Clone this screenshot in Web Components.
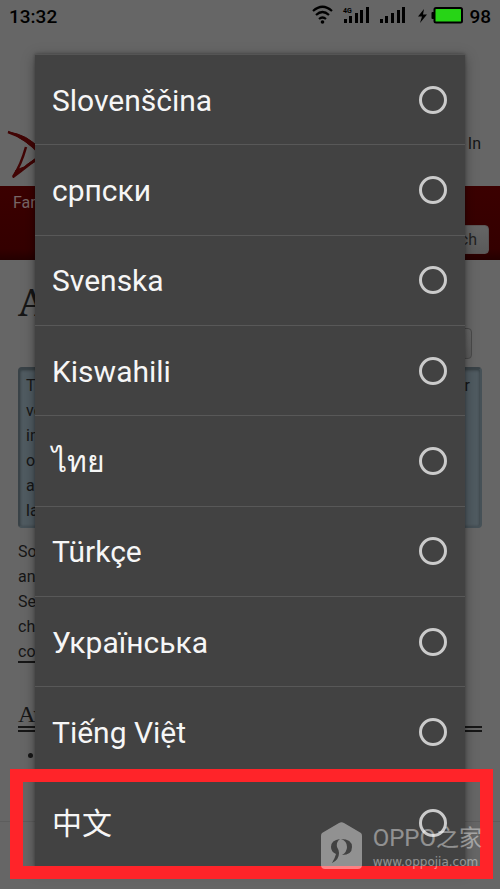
<!DOCTYPE html>
<html lang="en">
<head>
<meta charset="utf-8">
<meta name="viewport" content="width=device-width">
<title>Choose language</title>
<style>
html, body { height: 100%; }
body { margin: 0; background: #666; color: #161616; font-family: Roboto, "Noto Sans", "Noto Sans CJK SC", sans-serif; overflow: hidden; }
</style>
</head>
<body>
<phone-screen></phone-screen>
<script>
const define = (name, html) => customElements.define(name, class extends HTMLElement {
  constructor() {
    super();
    this.attachShadow({ mode: "open" }).innerHTML = html;
  }
});

define("status-bar", `
<style>
:host { display: flex; align-items: center; height: 32px; padding: 0 9px; color: #000; font-size: 19px; font-weight: 500; }
time { flex: 1; }
svg { display: block; }
</style>
<time>13:32</time>
<svg width="157" height="32" viewBox="312 0 157 32" aria-hidden="true">
  <g fill="none" stroke="#000" stroke-width="2.2">
    <path d="M313 11Q322.500 2.500 332 11M316 15Q322.500 9 329 15M319 19Q322.500 16 326 19"/>
  </g>
  <circle cx="322.500" cy="22" r="1.800"/>
  <path d="M344 19h3v4h-3zM349 16h3v7h-3zM355 13h3v10h-3zM360 10h3v13h-3zM366 7h3v16h-3z"/>
  <path d="M380 19h3v4h-3zM385 16h3v7h-3zM391 13h3v10h-3zM397 10h3v13h-3zM402 7h3v16h-3z"/>
  <text x="343" y="13" font-size="7" font-weight="700" font-family="Roboto">4G</text>
  <path d="M424 9l-6 7.500h4l-2 6.500 7-8.500h-4z"/>
  <rect x="431.500" y="12" width="3" height="7" rx="1"/>
  <rect x="434.500" y="8" width="27.500" height="14.500" rx="1.500" fill="#27d416" stroke="#000" stroke-width="2"/>
</svg>
<span>98</span>`);

define("site-page", `
<style>
:host { display: block; color: #161616; font-size: 16px; line-height: 25px; }
.brand { display: flex; align-items: center; justify-content: space-between; height: 62px; padding: 92px 19px 0 7px; }
.brand svg { margin-top: 2px; }
.brand span { margin-bottom: 24px; }
nav { display: flex; flex-direction: column; justify-content: space-between; height: 74px; box-sizing: border-box; padding: 4px 11px 6px 13px; background: linear-gradient(#3b0000, #340000 85%, #240000); }
nav a { color: #766; text-decoration: none; }
button { font: inherit; line-height: 20px; color: #222; background: linear-gradient(#656565, #5a5a5a); border: 1px solid #5a5555; border-radius: 4px; height: 29px; padding: 0 11px; align-self: flex-end; }
main { display: flex; flex-direction: column; padding: 20px 18px 0; }
h1 { margin: 0; font: 38px/42px "Noto Serif", "Liberation Serif", serif; }
.tool { width: 72px; height: 31px; margin: 6px 10px 8px; background: linear-gradient(#666, #5b5b5b); border-color: #4a4a4a; }
.notice { display: flex; justify-content: space-between; padding: 4px 10px 3px 6px; border: 2px solid #394247; border-right-color: #465157; border-bottom-color: #465157; border-radius: 4px; background: #505b61; box-shadow: inset 0 1px 3px #30383c; }
p { margin: 0; }
.intro { margin-top: 11px; }
.intro a { color: inherit; text-decoration: none; border-bottom: 2px solid #161616; }
h2 { margin: 38px 0 0; font: 24px/24px "Liberation Serif", serif; border-bottom: 6px double #161616; }
ul { margin: 11px 0 0; padding-left: 27px; }
hr { margin: 53px -18px 0; border: 0; border-top: 1px solid #5d5d5d; align-self: stretch; }
</style>
<div class="brand">
  <svg width="60" height="54" viewBox="0 0 60 54" aria-hidden="true">
    <path d="M1 3Q20 9 34 26Q22 36 6 48Q14 36 19 18" fill="none" stroke="#420505" stroke-width="2.500"/>
    <path d="M1 3Q20 5 34 21V26Q17 9 1 3ZM6 48Q21 35 34 30V26Q20 34 6 48ZM6 49L9 41 17 38Z" fill="#420505" stroke="#420505"/>
  </svg>
  <span>Log In</span>
</div>
<nav><a href="#">Fan</a><button>Search</button></nav>
<main>
  <h1>A</h1>
  <button class="tool" aria-label="Options"></button>
  <div class="notice"><p>T<br>ve<br>in<br>o<br>a<br>la</p><p>r</p></div>
  <p class="intro">So<br>an<br>Se<br>ch<br><a href="#">co</a></p>
  <h2>Av</h2>
  <ul><li></li></ul>
  <hr>
</main>`);

define("language-option", `
<style>
:host { display: block; border-bottom: 1px solid #585858; box-sizing: border-box; min-height: 0; }
:host(:last-child) { border-bottom: 0; }
label { display: flex; align-items: center; justify-content: space-between; height: 100%; padding: 2px 18px 0 17px; box-sizing: border-box; color: #f6f6f6; font-size: 30px; line-height: 40px; }
input { appearance: none; width: 28px; height: 28px; margin: 0 0 2px; border: 3px solid #cbcbcb; border-radius: 50%; background: none; }
input:checked { background: radial-gradient(#cbcbcb 40%, transparent 44%); }
</style>
<label><slot></slot><input type="radio" name="language"></label>`);

define("language-dialog", `
<style>
:host { display: grid; grid-auto-rows: 1fr; background: #424242; border-top: 1px solid #555; box-sizing: border-box; box-shadow: 0 3px 12px rgba(0,0,0,.35), 0 0 3px rgba(0,0,0,.3); }
</style>
<slot></slot>`);

define("site-watermark", `
<style>
:host { display: flex; align-items: center; gap: 11px; color: #fff; opacity: .42; font-family: "Noto Sans CJK SC", sans-serif; }
svg { display: block; }
strong, small { display: block; white-space: nowrap; }
strong { font: 400 23px/30px "Noto Sans CJK SC", sans-serif; }
b { font: 400 24px/30px Roboto, sans-serif; }
small { font: 12px/18px "DejaVu Sans", sans-serif; }
</style>
<svg width="41" height="48" viewBox="0 0 41 48" aria-hidden="true">
  <path fill="currentColor" fill-rule="evenodd" d="M18 1Q20.500-.5 23 1L40 11Q41 12 41 14V43Q41 47 37 47H4Q0 47 0 43V14Q0 12 1 11ZM19 17Q10 18 10 25Q10 30 15 32Q14 36 11 41Q18 38 18 31Q18 28 16 25Q15 20 19 17ZM20 17Q31 17 31 25Q31 33 21 33Q26 30 26 25Q26 19 20 17Z"/>
</svg>
<div><strong><b>OPPO</b>之家</strong><small>www.oppojia.com</small></div>`);

define("phone-screen", `
<style>
:host { display: block; position: relative; height: 100%; overflow: hidden; }
language-dialog { position: absolute; inset: 54px 35px 21px; }
.highlight { position: absolute; inset: auto 7px 10px 10px; height: 110px; box-sizing: border-box; border: 13px solid #ff2429; pointer-events: none; }
site-watermark { position: absolute; right: 18px; bottom: 18px; pointer-events: none; }
</style>
<status-bar></status-bar>
<site-page></site-page>
<language-dialog role="dialog" aria-label="Choose language">
  <language-option>Slovenščina</language-option>
  <language-option>српски</language-option>
  <language-option>Svenska</language-option>
  <language-option>Kiswahili</language-option>
  <language-option>ไทย</language-option>
  <language-option>Türkçe</language-option>
  <language-option>Українська</language-option>
  <language-option>Tiếng Việt</language-option>
  <language-option lang="zh-CN">中文</language-option>
</language-dialog>
<div class="highlight"></div>
<site-watermark></site-watermark>`);
</script>
</body>
</html>
